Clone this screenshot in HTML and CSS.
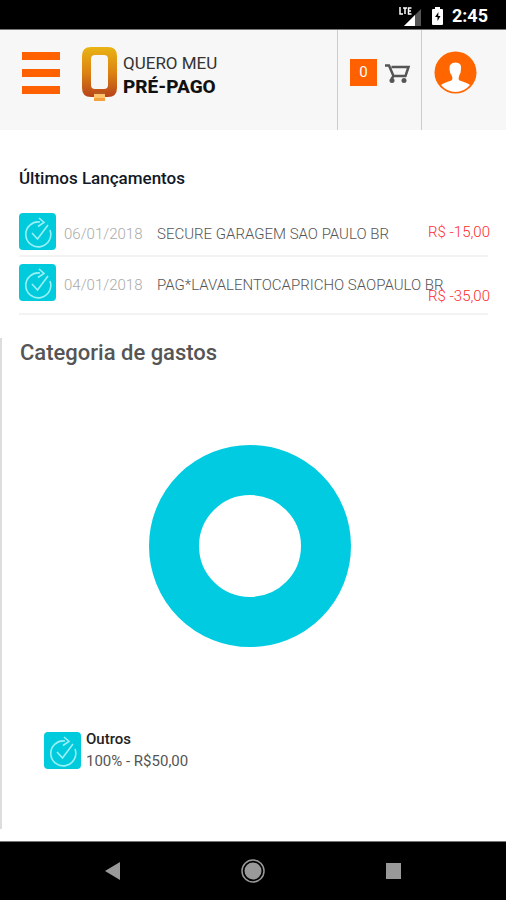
FILE: index.html
```html
<!DOCTYPE html>
<html lang="pt-BR">
<head>
<meta charset="utf-8">
<meta name="viewport" content="width=device-width, initial-scale=1">
<title>Quero Meu Pré-Pago</title>
<link rel="stylesheet" href="styles.css">
</head>
<body>
<svg class="defs" aria-hidden="true">
  <symbol id="check" viewBox="0 0 37 37">
    <path d="M21 9A12.500 12.500 0 1 0 31 17" fill="none" stroke="#9af0f7" stroke-width="1.600"/>
    <path d="M20 5l5 4.500-6 4M13 20l5.500 6L29 12" fill="none" stroke="#9af0f7" stroke-width="1.600"/>
  </symbol>
</svg>
<div class="status">
  <svg width="24" height="20" viewBox="0 0 24 20" role="img" aria-label="LTE">
    <path d="M23 3V20H6z" fill="#555"/>
    <path d="M17 9v11H6z" fill="#fff"/>
    <path d="M2 1v7h3M5 2h4M7 2v6M13.500 2H10.500v6H13.500M10.500 5H13" fill="none" stroke="#fff" stroke-width="1.500"/>
  </svg>
  <svg width="11" height="18" viewBox="0 0 11 18" role="img" aria-label="Bateria">
    <path d="M3 0h5v2h2q1 0 1 1v14q0 1-1 1H1q-1 0-1-1V3q0-1 1-1h2z" fill="#fff"/>
    <path d="M6.500 5L3 10h2.500v4L8.500 9H6.200z" fill="#000"/>
  </svg>
  <span class="time">2:45</span>
</div>
<header class="header">
  <button class="menu" aria-label="Menu"><span></span><span></span><span></span></button>
  <a class="brand" href="#">
    <svg width="35" height="55" viewBox="0 0 35 55" aria-hidden="true">
      <defs><linearGradient id="gold" x1="0" y1="0" x2="0" y2="1"><stop offset="0" stop-color="#e9b414"/><stop offset=".5" stop-color="#dc8412"/><stop offset="1" stop-color="#b8431b"/></linearGradient></defs>
      <path fill="url(#gold)" fill-rule="evenodd" d="M9 0H26Q35 0 35 9V41Q35 50 26 50H9Q0 50 0 41V9Q0 0 9 0ZM13 8Q9 8 9 12V38Q9 42 13 42H22Q26 42 26 38V12Q26 8 22 8Z"/>
      <path d="M12 45H23V54H12z" fill="#f2a13c"/><path d="M12 45H23V47H12z" fill="#b85a20"/>
      <path d="M12 47H23V51H12z" fill="#ffc36b"/>
    </svg>
    <span class="name"><span>QUERO MEU</span><strong>PRÉ-PAGO</strong></span>
  </a>
  <a class="cart" href="#" aria-label="Carrinho">
    <span class="count">0</span>
    <svg width="26" height="20" viewBox="0 0 26 20" aria-hidden="true">
      <path d="M0 1.500H4L8.500 12H20.500L23.500 3H6.500M8.500 12L6.500 15" fill="none" stroke="#555" stroke-width="2.500"/>
      <circle cx="7" cy="16.500" r="2.500" fill="#555"/><circle cx="19" cy="16.500" r="2.500" fill="#555"/>
    </svg>
  </a>
  <a class="user" href="#" aria-label="Perfil">
    <svg width="43" height="43" viewBox="0 0 43 43" aria-hidden="true">
      <circle cx="21.500" cy="21.500" r="21" fill="#ff6600"/>
      <path d="M7 34Q9 32 17.500 29.500Q19 28 18 25Q15.500 22 15.500 18Q15 11.500 21.500 11.500Q28 11.500 27 18Q27 22 25 25Q24 28 25.500 29.500Q34 32 36 34Q30 41 21.500 41Q13 41 7 34Z" fill="#fff"/>
    </svg>
  </a>
</header>
<main class="main">
  <section class="entries">
    <h2>Últimos Lançamentos</h2>
    <ul>
      <li>
        <svg class="tile"><use href="#check"/></svg>
        <time datetime="2018-01-06">06/01/2018</time>
        <span class="desc">SECURE GARAGEM SAO PAULO BR</span>
        <span class="amount">R$ -15,00</span>
      </li>
      <li class="long">
        <svg class="tile"><use href="#check"/></svg>
        <time datetime="2018-01-04">04/01/2018</time>
        <span class="desc">PAG*LAVALENTOCAPRICHO SAOPAULO BR</span>
        <span class="amount">R$ -35,00</span>
      </li>
    </ul>
  </section>
  <section class="spending">
    <h1>Categoria de gastos</h1>
    <svg class="chart" viewBox="0 0 202 202" role="img" aria-label="Outros 100%">
      <circle cx="101" cy="101" r="76" fill="none" stroke="#00cbe1" stroke-width="50"/>
    </svg>
    <div class="legend">
      <svg class="tile"><use href="#check"/></svg>
      <div><strong>Outros</strong><p>100% - R$50,00</p></div>
    </div>
  </section>
</main>
<nav class="system">
  <button aria-label="Voltar"><svg width="24" height="24" viewBox="0 0 24 24"><path d="M5 12L20 3V21z" fill="#999"/></svg></button>
  <button aria-label="Início"><svg width="24" height="24" viewBox="0 0 24 24"><circle cx="12" cy="12" r="11" fill="none" stroke="#999" stroke-width="1.500"/><circle cx="12" cy="12" r="8.500" fill="#999"/></svg></button>
  <button aria-label="Recentes"><svg width="24" height="24" viewBox="0 0 24 24"><path d="M4 4H19V20H4z" fill="#999"/></svg></button>
</nav>
</body>
</html>
```
FILE: styles.css
```css
* { box-sizing: border-box; }
body {
  margin: 0;
  min-height: 100vh;
  display: flex;
  flex-direction: column;
  background: #fff;
  color: #555;
  font-family: Roboto, "Liberation Sans", sans-serif;
  font-size: 15px;
  line-height: 20px;
}
h1, h2, p, ul { margin: 0; padding: 0; }
a { color: inherit; text-decoration: none; }
button { border: 0; padding: 0; background: none; }
.defs { width: 0; height: 0; position: absolute; }

.status {
  height: 30px;
  padding: 2px 18px 0 0;
  display: flex;
  justify-content: flex-end;
  align-items: center;
  background: #000;
  border-bottom: 1px solid #777;
  color: #fff;
}
.status svg + svg { margin-left: 10px; }
.time { margin-left: 9px; font-size: 18px; font-weight: 700; }

.header {
  height: 100px;
  display: flex;
  background: #f7f7f7;
}
.menu {
  width: 38px;
  margin: 22px 0 0 22px;
  display: flex;
  flex-direction: column;
  gap: 9px;
}
.menu span { height: 8px; width: 100%; background: #ff6000; }
.brand {
  flex: 1;
  margin: 17px 0 0 22px;
  display: flex;
  align-items: flex-start;
  gap: 6px;
}
.name {
  padding-top: 4px;
  display: flex;
  flex-direction: column;
  font-size: 17px;
  line-height: 24px;
  color: #333;
  white-space: nowrap;
}
.name strong { color: #111; font-size: 19px; font-weight: 800; }
.cart {
  width: 84px;
  padding: 29px 0 0 12px;
  display: flex;
  align-items: flex-start;
  gap: 8px;
  border-left: 1px solid #ccc;
}
.cart svg { margin-top: 5px; }
.count {
  width: 27px;
  line-height: 27px;
  background: #ff6000;
  color: #fff;
  text-align: center;
}
.user {
  width: 85px;
  padding: 21px 0 0 12px;
  border-left: 1px solid #ccc;
}

.main { flex: 1; padding-bottom: 12px; display: flex; flex-direction: column; }
.entries { padding: 38px 18px 0 19px; }
.entries h2 {
  font-size: 17px;
  font-weight: 500;
  color: #111827;
  padding-bottom: 18px;
}
.entries ul { list-style: none; }
.entries li {
  min-height: 51px;
  padding-top: 7px;
  display: grid;
  grid-template-columns: 45px 93px 1fr;
  align-items: start;
  border-bottom: 2px solid #f3f3f3;
}
.entries .long { min-height: 58px; }
.tile {
  width: 37px;
  height: 37px;
  border-radius: 4px;
  background: #00cbdd;
}
time, .desc { font-weight: 300; line-height: 42px; white-space: nowrap; }
time { color: #aaa; }
.desc, .amount { grid-column: 3; grid-row: 1; }
.amount {
  justify-self: end;
  margin-right: -2px;
  line-height: 38px;
  color: #ff2b2b;
  font-weight: 300;
}
.long .amount { align-self: end; line-height: 34px; }

.spending {
  flex: 1;
  margin-top: 23px;
  padding: 0 26px 0 18px;
  border-left: 2px solid #ddd;
}
h1 { font-size: 22px; line-height: 30px; font-weight: 500; }
.chart { display: block; width: 202px; margin: 77px auto 85px; }
.legend { display: flex; gap: 5px; padding-left: 24px; }
.legend strong { display: block; line-height: 14px; color: #222; font-weight: 500; }
.legend p { line-height: 30px; }

.system {
  height: 59px;
  padding: 0 42px;
  display: flex;
  background: #000;
  border-top: 1px solid #777;
}
.system button { flex: 1; }
.system svg { display: block; margin: auto; }
```
